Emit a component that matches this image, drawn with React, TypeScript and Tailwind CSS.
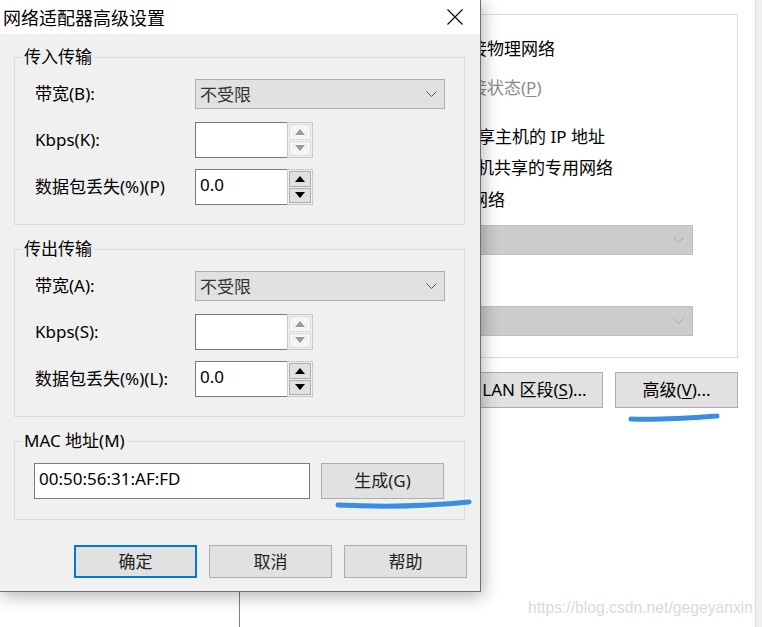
import type { ReactNode } from "react";

const ui = "font-['Noto_Sans','Noto_Sans_CJK_SC',sans-serif]";

const Chevron = ({ color }: { color: string }) => (
	<svg width="11" height="6" viewBox="0 0 11 6" fill="none">
		<path d="M0.5 0.5 L5.5 5.5 L10.5 0.5" stroke={color} strokeWidth="1" />
	</svg>
);

const Arrow = ({ up, color }: { up?: boolean; color: string }) => (
	<svg width="10" height="6" viewBox="0 0 10 6">
		<polygon points={up ? "0,6 5,0 10,6" : "0,0 10,0 5,6"} fill={color} />
	</svg>
);

const Select = ({ value }: { value: string }) => (
	<div className="flex h-[30px] w-[250px] items-center justify-between border border-[#adadad] bg-[#e1e1e1] pl-[4px] pr-[7px]">
		<span className="text-[17px] leading-none text-[#333]">{value}</span>
		<Chevron color="#555" />
	</div>
);

const Spin = ({ value, disabled }: { value?: string; disabled?: boolean }) => {
	const btn = disabled
		? "flex flex-1 items-center justify-center border border-[#dcdcdc] bg-[#f4f4f4]"
		: "flex flex-1 items-center justify-center border border-[#adadad] bg-[#e1e1e1]";
	const arrow = disabled ? "#9a9a9a" : "#000";
	return (
		<div className="flex h-[36px] w-[118px]">
			<div className="flex flex-1 items-center border border-r-0 border-[#7a7a7a] bg-white pb-[4px] pl-[4px] text-[17px] text-black">
				{value}
			</div>
			<div className="flex w-[26px] flex-col gap-px border border-[#c8c8c8] bg-[#f0f0f0] p-px">
				<div className={btn}>
					<Arrow up color={arrow} />
				</div>
				<div className={btn}>
					<Arrow color={arrow} />
				</div>
			</div>
		</div>
	);
};

const Row = ({ label, children, className = "" }: { label: string; children: ReactNode; className?: string }) => (
	<div className={`flex items-center ${className}`}>
		<span className="w-[160px] text-[17px] leading-[24px] text-black">{label}</span>
		{children}
	</div>
);

const Group = ({ legend, children, className = "" }: { legend: string; children: ReactNode; className?: string }) => (
	<div className={`relative ml-[14px] mr-[15px] border border-[#dcdcdc] ${className}`}>
		<span className="absolute left-[7px] top-[-12px] bg-[#f0f0f0] px-[2px] text-[17px] leading-[22px] text-black">
			{legend}
		</span>
		{children}
	</div>
);

const Transfer = ({ legend, keys }: { legend: string; keys: [string, string, string] }) => (
	<Group legend={legend} className="h-[168px] pl-[20px] pt-[21px]">
		<Row label={`带宽(${keys[0]}):`}>
			<Select value="不受限" />
		</Row>
		<Row label={`Kbps(${keys[1]}):`} className="mt-[13px]">
			<Spin disabled />
		</Row>
		<Row label={`数据包丢失(%)(${keys[2]})${keys[2] === "L" ? ":" : ""}`} className="mt-[11px]">
			<Spin value="0.0" />
		</Row>
	</Group>
);

const Button = ({ children, primary }: { children: ReactNode; primary?: boolean }) => (
	<div
		className={`flex h-[33px] w-[123px] items-center justify-center bg-[#e1e1e1] text-[17px] text-[#222] ${
			primary ? "border-2 border-[#0078d7]" : "border border-[#adadad]"
		}`}>
		{children}
	</div>
);

const BgSelect = () => (
	<div className="flex h-[30px] items-center justify-end border border-[#bfbfbf] bg-[#cccccc] pr-[8px]">
		<Chevron color="#a8a8a8" />
	</div>
);

const BackgroundWindow = () => (
	<div className="flex h-full w-[756px] bg-white pl-[239px]">
		<div className={`flex flex-1 flex-col border-l border-r border-l-[#808080] border-r-[#dadada] pt-[14px] ${ui}`}>
			<div className="ml-[200px] mr-[17px] flex h-[344px] flex-col border border-[#dcdcdc] pt-[22px] text-[17px] leading-[24px] text-black">
				<div className="pl-[12px]">连接物理网络</div>
				<div className="mt-[15px] pl-[12px] text-[#8c8c8c]">
					连接状态(<span className="underline underline-offset-2">P</span>)
				</div>
				<div className="mt-[25px] pl-[20px]">共享主机的 IP 地址</div>
				<div className="mt-[7px] pl-[19px]">主机共享的专用网络</div>
				<div className="mt-[8px] pl-[13px]">拟网络</div>
				<div className="ml-[20px] mr-[44px] mt-[13px]">
					<BgSelect />
				</div>
				<div className="ml-[20px] mr-[44px] mt-[51px]">
					<BgSelect />
				</div>
			</div>
			<div className="mr-[17px] mt-[14px] flex justify-end gap-[12px] text-[17px] text-black">
				<div className="flex h-[36px] w-[137px] items-center justify-center border border-[#adadad] bg-[#e1e1e1]">
					LAN 区段(<span className="underline underline-offset-2">S</span>)...
				</div>
				<div className="flex h-[36px] w-[123px] items-center justify-center border border-[#adadad] bg-[#e1e1e1]">
					高级(<span className="underline underline-offset-2">V</span>)...
				</div>
			</div>
		</div>
	</div>
);

const Dialog = () => (
	<div
		className={`absolute left-0 top-0 flex h-[592px] w-[481px] flex-col border-b border-r border-[#707070] bg-[#f0f0f0] shadow-[2px_4px_16px_rgba(0,0,0,0.3)] ${ui}`}>
		<div className="flex h-[34px] items-center justify-between bg-white pl-[3px] pr-[17px]">
			<span className="font-['Noto_Sans_CJK_SC',sans-serif] text-[18px] leading-none text-black">网络适配器高级设置</span>
			<svg width="16" height="16" viewBox="0 0 16 16">
				<path d="M0.5 0.5 L15.5 15.5 M15.5 0.5 L0.5 15.5" stroke="#000" strokeWidth="1.1" />
			</svg>
		</div>
		<div className="mt-[23px]">
			<Transfer legend="传入传输" keys={["B", "K", "P"]} />
		</div>
		<div className="mt-[24px]">
			<Transfer legend="传出传输" keys={["A", "S", "L"]} />
		</div>
		<Group legend="MAC 地址(M)" className="mt-[24px] flex h-[79px] gap-[11px] pl-[19px] pt-[21px]">
			<div className="flex h-[36px] w-[276px] items-center border border-[#7a7a7a] bg-white pb-[4px] pl-[4px] text-[17px] text-black">
				00:50:56:31:AF:FD
			</div>
			<div className="flex h-[36px] w-[123px] items-center justify-center border border-[#adadad] bg-[#e1e1e1] text-[17px] text-[#222]">
				生成(G)
			</div>
		</Group>
		<div className="mr-[13px] mt-[25px] flex justify-end gap-[12px]">
			<Button primary>确定</Button>
			<Button>取消</Button>
			<Button>帮助</Button>
		</div>
	</div>
);

const App = () => (
	<div className="relative flex h-[627px] w-[762px] overflow-hidden bg-[#f0f0f0]">
		<BackgroundWindow />
		<Dialog />
		<svg className="pointer-events-none absolute left-0 top-0" width="762" height="627" viewBox="0 0 762 627" fill="none">
			<path d="M631 419 C 660 420, 690 418, 717 416" stroke="#3a8ee2" strokeWidth="5" strokeLinecap="round" />
			<path d="M338 505 C 380 507, 430 506, 469 502" stroke="#3a8ee2" strokeWidth="5" strokeLinecap="round" />
		</svg>
		<span className="absolute bottom-[9px] right-[9px] font-['Liberation_Sans',sans-serif] text-[15.7px] leading-[20px] text-[#dadada]">
			https://blog.csdn.net/gegeyanxin
		</span>
	</div>
);

export default App;
